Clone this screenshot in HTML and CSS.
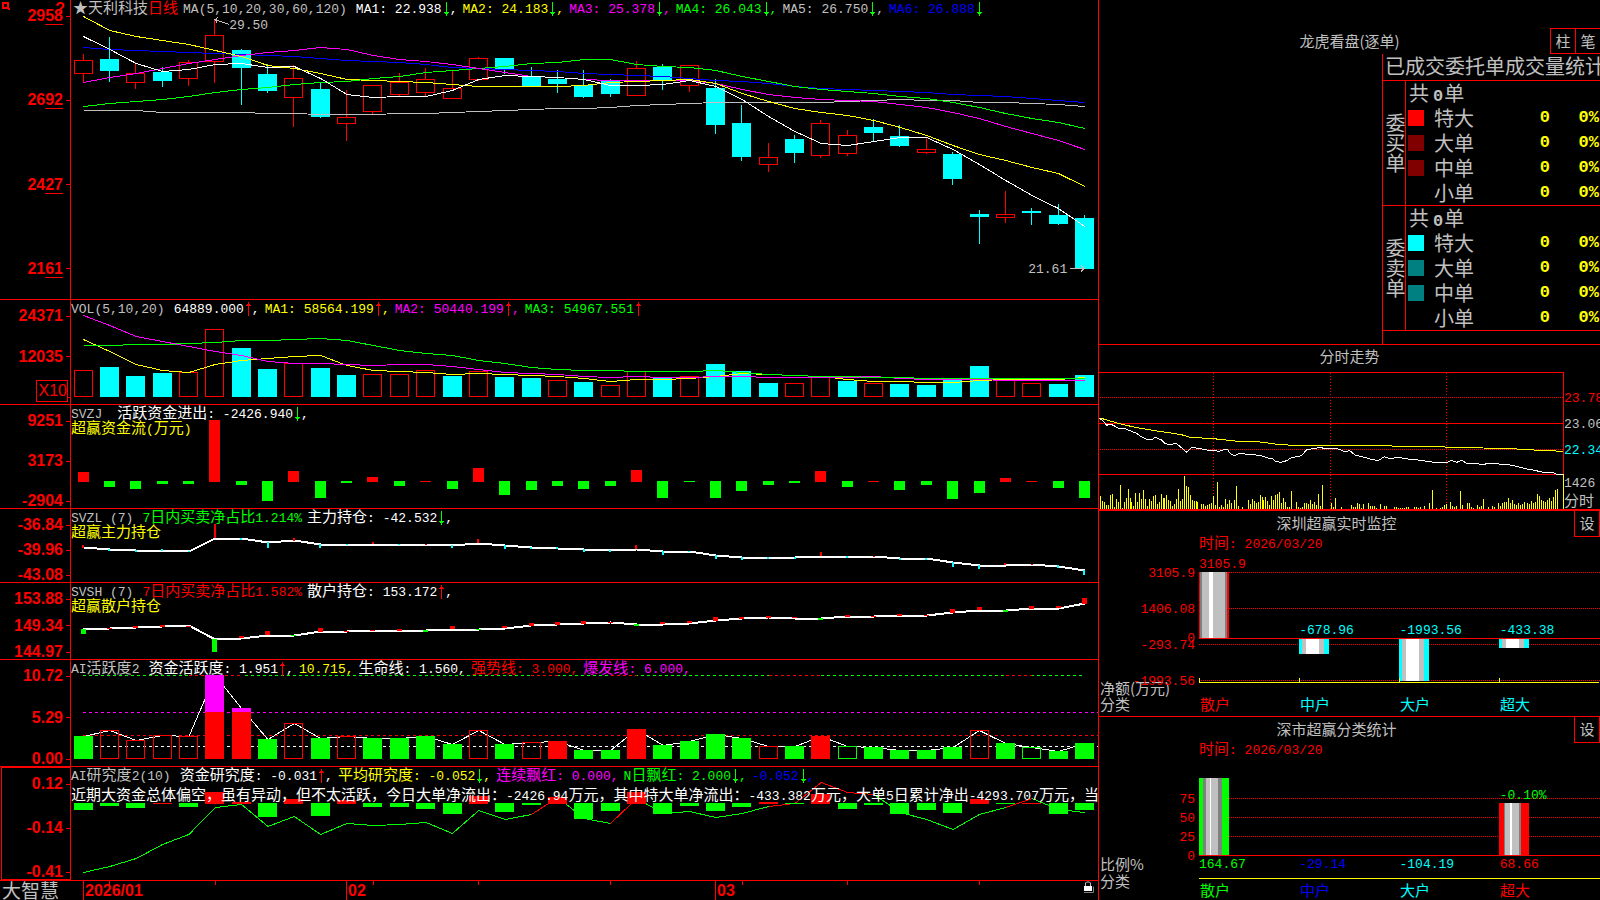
FILE: index.html
```html
<!DOCTYPE html>
<html lang="zh-CN">
<head>
  <meta charset="UTF-8" />
  <meta name="viewport" content="width=device-width, initial-scale=1" />
  <title>天利科技 日线 - 大智慧</title>
  <link rel="stylesheet" href="styles.css">
</head>
<body>
  <svg width="0" height="0" class="defs">
    <symbol id="up" viewBox="0 0 8 14"><path d="M4.5 0v14M2 3.5h5M3 2.5h3" stroke="#f00" fill="none" /></symbol>
    <symbol id="down" viewBox="0 0 8 14"><path d="M4.5 0v14M2 10.5h5M3 11.5h3" stroke="#0f0" fill="none" /></symbol>
  </svg>

  <div class="app">
    <main class="charts">
      <section class="panel">
        <div class="axis">
          <svg class="pin" viewBox="0 0 8 8"><path d="M1 1h5v5h-5zM6 6l2 2" stroke="#f00" stroke-width="2" fill="none" /></svg>
          <span class="help">?</span>
          <span class="tick">29<u>58</u></span>
          <span class="tick">26<u>92</u></span>
          <span class="tick">24<u>27</u></span>
          <span class="tick">21<u>61</u></span>
        </div>
        <div class="view">
          <svg class="plot" id="kline" viewBox="71 0 1027 299" preserveAspectRatio="none"></svg>
          <div class="legend stock">
            <span class="silver"><span class="cn">★天利科技<span class="red">日线</span></span></span>
            <span class="silver name">MA(5,10,20,30,60,120)</span>
            <span>MA1: 22.938<svg class="arrow"><use href="#down" /></svg>,</span>
            <span class="yellow">MA2: 24.183<svg class="arrow"><use href="#down" /></svg>,</span>
            <span class="magenta">MA3: 25.378<svg class="arrow"><use href="#down" /></svg>,</span>
            <span class="green">MA4: 26.043<svg class="arrow"><use href="#down" /></svg>,</span>
            <span class="silver">MA5: 26.750<svg class="arrow"><use href="#down" /></svg>,</span>
            <span class="blue">MA6: 26.888<svg class="arrow"><use href="#down" /></svg></span>
          </div>
          <span class="mark high">29.50</span>
          <span class="mark low">21.61</span>
        </div>
      </section>

      <section class="panel">
        <div class="axis">
          <span class="tick">24371</span>
          <span class="tick">12035</span>
          <span class="tick"></span>
          <span class="scale">X10</span>
        </div>
        <div class="view">
          <svg class="plot" id="vol" viewBox="71 300 1027 104" preserveAspectRatio="none"></svg>
          <div class="legend">
            <span class="silver name">VOL(5,10,20)</span>
            <span>64889.000<svg class="arrow"><use href="#up" /></svg>,</span>
            <span class="yellow">MA1: 58564.199<svg class="arrow"><use href="#up" /></svg>,</span>
            <span class="magenta">MA2: 50440.199<svg class="arrow"><use href="#up" /></svg>,</span>
            <span class="green">MA3: 54967.551<svg class="arrow"><use href="#up" /></svg></span>
          </div>
        </div>
      </section>

      <section class="panel">
        <div class="axis">
          <span class="tick">9251</span>
          <span class="tick">3173</span>
          <span class="tick">-2904</span>
        </div>
        <div class="view">
          <svg class="plot" id="flow" viewBox="71 405 1027 103" preserveAspectRatio="none"></svg>
          <div class="legend">
            <span class="silver name wide">SVZJ</span>
            <span><span class="cn">活跃资金进出</span>: -2426.940<svg class="arrow"><use href="#down" /></svg>,</span>
            <span class="yellow title"><span class="cn">超赢资金流</span>(<span class="cn">万元</span>)</span>
          </div>
        </div>
      </section>

      <section class="panel">
        <div class="axis">
          <span class="tick">-36.84</span>
          <span class="tick">-39.96</span>
          <span class="tick">-43.08</span>
        </div>
        <div class="view">
          <svg class="plot" id="main-hold" viewBox="71 509 1027 73" preserveAspectRatio="none"></svg>
          <div class="legend">
            <span class="silver name">SVZL (7)</span>
            <span class="green">7<span class="cn">日内买卖净占比</span>1.214%</span>
            <span><span class="cn">主力持仓</span>: -42.532<svg class="arrow"><use href="#down" /></svg>,</span>
            <span class="yellow title"><span class="cn">超赢主力持仓</span></span>
          </div>
        </div>
      </section>

      <section class="panel">
        <div class="axis">
          <span class="tick">153.88</span>
          <span class="tick">149.34</span>
          <span class="tick">144.97</span>
        </div>
        <div class="view">
          <svg class="plot" id="retail-hold" viewBox="71 583 1027 76" preserveAspectRatio="none"></svg>
          <div class="legend">
            <span class="silver name">SVSH (7)</span>
            <span class="red">7<span class="cn">日内买卖净占比</span>1.582%</span>
            <span><span class="cn">散户持仓</span>: 153.172<svg class="arrow"><use href="#up" /></svg>,</span>
            <span class="yellow title"><span class="cn">超赢散户持仓</span></span>
          </div>
        </div>
      </section>

      <section class="panel">
        <div class="axis">
          <span class="tick">10.72</span>
          <span class="tick">5.29</span>
          <span class="tick">0.00</span>
        </div>
        <div class="view">
          <svg class="plot" id="active" viewBox="71 660 1027 106" preserveAspectRatio="none"></svg>
          <div class="legend">
            <span class="silver name">AI<span class="cn">活跃度</span>2</span>
            <span><span class="cn">资金活跃度</span>: 1.951<svg class="arrow"><use href="#up" /></svg>,</span>
            <span class="yellow">10.715,</span>
            <span><span class="cn">生命线</span>: 1.560,</span>
            <span class="red"><span class="cn">强势线</span>: 3.000,</span>
            <span class="magenta"><span class="cn">爆发线</span>: 6.000,</span>
          </div>
        </div>
      </section>

      <section class="panel selected">
        <div class="axis">
          <span class="tick">0.12</span>
          <span class="tick">-0.14</span>
          <span class="tick">-0.41</span>
        </div>
        <div class="view">
          <svg class="plot" id="research" viewBox="71 767 1027 113" preserveAspectRatio="none"></svg>
          <div class="legend">
            <span class="silver name">AI<span class="cn">研究度</span>2(10)</span>
            <span><span class="cn">资金研究度</span>: -0.031<svg class="arrow"><use href="#up" /></svg>,</span>
            <span class="yellow"><span class="cn">平均研究度</span>: -0.052<svg class="arrow"><use href="#down" /></svg>,</span>
            <span class="magenta"><span class="cn">连续飘红</span>: 0.000,</span>
            <span class="green">N<span class="cn">日飘红</span>: 2.000<svg class="arrow"><use href="#down" /></svg>,</span>
            <span class="blue">-0.052<svg class="arrow"><use href="#down" /></svg>,</span>
            <p class="comment"><span class="cn">近期大资金总体偏空，虽有异动，但不太活跃，今日大单净流出：</span>-2426.94<span class="cn">万元，其中特大单净流出：</span>-433.382<span class="cn">万元，大单</span>5<span class="cn">日累计净出</span>-4293.707<span class="cn">万元，当日</span></p>
          </div>
        </div>
      </section>

      <footer class="dates">
        <div class="brand">大智慧</div>
        <div class="view">
          <svg class="plot" id="dates" viewBox="71 881 1027 19" preserveAspectRatio="none"></svg>
          <div class="months">
            <span>2026/01</span>
            <span>02</span>
            <span>03</span>
            <svg class="lock" viewBox="0 0 11 12"><path d="M2.5 5v-3l1-1h3l1 1v3" stroke="#c0c0c0" fill="none" /><path d="M1 5h8v5h-8z" fill="#fff" /><path d="M1 11.500h9.500v-6" stroke="#808080" fill="none" /></svg>
          </div>
        </div>
      </footer>
    </main>

    <aside class="side">
      <section class="orders">
        <header class="orders-head">
          <h2>龙虎看盘(逐单)</h2>
          <div class="modes"><button type="button">柱</button><button type="button">笔</button></div>
        </header>
        <div class="stats">
          <h3>已成交委托单成交量统计</h3>
          <table>
            <colgroup><col class="c-side"><col class="c-key"><col class="c-name"><col class="c-num"><col class="c-pct"></colgroup>
            <tbody>
              <tr><th rowspan="5" scope="rowgroup">委买单</th><td colspan="4" class="sum">共<b>0</b>单</td></tr>
              <tr><td><i class="key k-red"></i></td><td>特大</td><td class="num">0</td><td class="num">0%</td></tr>
              <tr><td><i class="key k-maroon"></i></td><td>大单</td><td class="num">0</td><td class="num">0%</td></tr>
              <tr><td><i class="key k-maroon"></i></td><td>中单</td><td class="num">0</td><td class="num">0%</td></tr>
              <tr><td></td><td>小单</td><td class="num">0</td><td class="num">0%</td></tr>
            </tbody>
            <tbody>
              <tr><th rowspan="5" scope="rowgroup">委卖单</th><td colspan="4" class="sum">共<b>0</b>单</td></tr>
              <tr><td><i class="key k-cyan"></i></td><td>特大</td><td class="num">0</td><td class="num">0%</td></tr>
              <tr><td><i class="key k-teal"></i></td><td>大单</td><td class="num">0</td><td class="num">0%</td></tr>
              <tr><td><i class="key k-teal"></i></td><td>中单</td><td class="num">0</td><td class="num">0%</td></tr>
              <tr><td></td><td>小单</td><td class="num">0</td><td class="num">0%</td></tr>
            </tbody>
          </table>
        </div>
      </section>

      <section class="intraday">
        <h2>分时走势</h2>
        <div class="intraday-body">
          <svg class="plot" id="intraday" viewBox="12 96 1395 411" preserveAspectRatio="none"></svg>
          <div class="quotes">
            <span class="red">23.78</span>
            <span class="silver">23.06</span>
            <span class="cyan">22.34</span>
            <span class="silver small first">1426</span>
            <span class="silver small cn">分时</span>
          </div>
        </div>
      </section>

      <section class="monitor">
        <header><h2>深圳超赢实时监控</h2><button type="button">设</button></header>
        <p class="time red"><span class="cn">时间</span>: 2026/03/20</p>
        <div class="bars">
          <div class="levels" id="monitor-levels"></div>
          <div class="view">
            <svg class="plot" id="monitor" viewBox="1199 553 401 130" preserveAspectRatio="none"></svg>
            <div class="values" id="monitor-values"></div>
          </div>
          <div class="units"><span>净额(万元)</span><span>分类</span></div>
          <div class="cats">
            <span class="red">散户</span><span class="cyan">中户</span><span class="cyan">大户</span><span class="cyan">超大</span>
          </div>
        </div>
      </section>

      <section class="ratio">
        <header><h2>深市超赢分类统计</h2><button type="button">设</button></header>
        <p class="time red"><span class="cn">时间</span>: 2026/03/20</p>
        <div class="bars">
          <div class="levels" id="ratio-levels"></div>
          <div class="view">
            <svg class="plot" id="ratio" viewBox="1199 759 401 98" preserveAspectRatio="none"></svg>
            <div class="values" id="ratio-values"></div>
          </div>
          <div class="units"><span>比例%</span><span>分类</span></div>
          <div>
            <div class="totals">
              <span class="green">164.67</span><span class="blue">-29.14</span><span class="cyan">-104.19</span><span class="red">68.66</span>
            </div>
            <div class="cats">
              <span class="green">散户</span><span class="blue">中户</span><span class="cyan">大户</span><span class="red">超大</span>
            </div>
          </div>
        </div>
      </section>
    </aside>
  </div>

  <script src="charts.js"></script>
</body>
</html>
```

FILE: styles.css
```css
* {
  box-sizing: border-box;
}
body {
  margin: 0;
  background: #000;
  color: #fff;
  font-family: "Liberation Mono", "Noto Sans CJK SC", monospace;
  font-size: 13px;
  line-height: 15px;
}
h2, h3, p {
  margin: 0;
  font-weight: normal;
}
.defs {
  position: absolute;
}
.app {
  display: grid;
  grid-template-columns: minmax(0, 1098fr) minmax(0, 502fr);
  height: 100vh;
  overflow: hidden;
}
.cn, .side h2, .side button, .units, .cats {
  font-family: "Noto Sans CJK SC", sans-serif;
  font-size: 15px;
}
/* keeps the taller CJK box from pushing the baseline down */
.legend .cn, .time .cn {
  line-height: 0;
}
.red { color: #f00; }
.green { color: #0f0; }
.blue { color: #00f; }
.cyan { color: #0ff; }
.yellow { color: #ff0; }
.magenta { color: #f0f; }
.silver { color: #c0c0c0; }

/* left: stacked indicator panels */
.charts {
  display: grid;
  grid-template-rows: 300fr 105fr 104fr 74fr 77fr 107fr 114fr 19fr;
  min-height: 0;
}
.panel, .dates {
  display: grid;
  grid-template-columns: 71px minmax(0, 1fr);
  min-height: 0;
}
.panel {
  border-bottom: 1px solid #f00;
}
.axis {
  position: relative;
  display: flex;
  flex-direction: column;
  justify-content: space-between;
  padding: 9px 0 0;
  border-right: 1px solid #f00;
  color: #f00;
  font: bold 16px/14px "Liberation Sans", sans-serif;
}
.panel:first-child .axis {
  padding-bottom: 23px;
}
.tick {
  display: flex;
  justify-content: flex-end;
  align-items: center;
  height: 14px;
}
.tick::after {
  content: "";
  width: 4px;
  height: 1px;
  margin-left: 3px;
  background: #f00;
}
.tick u {
  text-underline-offset: 3px;
  text-decoration-thickness: 1px;
}
.pin {
  position: absolute;
  top: 2px;
  left: 2px;
  width: 8px;
  height: 8px;
}
.help {
  position: absolute;
  top: 2px;
  right: 5px;
}
.scale {
  position: absolute;
  right: 2px;
  bottom: 2px;
  padding: 3px 0 3px 2px;
  border: 1px solid #f00;
  background: #000;
  font-weight: normal;
}
.selected .axis {
  margin-left: 1px;
  border: 1px solid #f00;
}
.view {
  position: relative;
  display: grid;
  min-width: 0;
  min-height: 0;
}
.plot {
  grid-area: 1 / 1;
  width: 100%;
  height: 100%;
  min-height: 0;
  shape-rendering: crispEdges;
}
.plot * {
  vector-effect: non-scaling-stroke;
}
.legend {
  grid-area: 1 / 1;
  display: flex;
  flex-wrap: wrap;
  align-content: flex-start;
  gap: 0 5px;
  padding-top: 2px;
  overflow: hidden;
  white-space: pre;
}
.stock {
  padding-left: 2px;
}
.legend .name {
  margin-right: 4px;
}
.legend .wide {
  margin-right: 10px;
}
.legend .title, .comment {
  width: 100%;
}
.legend > span {
  height: 15px;
}
.comment {
  margin-top: 5px;
}
.arrow {
  width: 8px;
  height: 14px;
  vertical-align: -3px;
}
.mark {
  position: absolute;
  color: #c0c0c0;
}
.high {
  top: 6%;
  left: 15.4%;
}
.low {
  top: 87.5%;
  right: 3%;
}
.brand {
  padding-left: 2px;
  color: #c0c0c0;
  font: 19px/18px "Noto Sans CJK SC", sans-serif;
}
.months {
  grid-area: 1 / 1;
  display: grid;
  grid-template-columns: 263fr 369fr 362fr 21px;
  padding-left: 1.17%;
  color: #f00;
  font: bold 16px/19px "Liberation Sans", sans-serif;
}
.months span {
  padding-left: 1px;
  border-left: 1px solid #f00;
}
.lock {
  width: 11px;
  height: 12px;
  margin-left: 6px;
}

/* right column */
.side {
  display: grid;
  grid-template-rows: 345fr 165fr 207fr 183fr;
  min-height: 0;
  border-left: 1px solid #f00;
}
.side > section {
  min-width: 0;
  min-height: 0;
  overflow: hidden;
}
.side > section:not(:last-child) {
  border-bottom: 1px solid #f00;
}
.side h2 {
  color: #c0c0c0;
  text-align: center;
}
.side button {
  width: 26px;
  height: 26px;
  padding: 0 0 2px;
  border: 1px solid #f00;
  background: #000;
  color: #c0c0c0;
}
.orders {
  display: flex;
  flex-direction: column;
}
.orders-head {
  display: grid;
  grid-template-columns: 1fr auto 1fr;
  align-items: center;
  padding-top: 28px;
}
.orders-head h2 {
  grid-column: 2;
  padding-bottom: 2px;
}
.modes {
  display: flex;
  justify-self: end;
}
.modes button + button {
  width: 25px;
  margin-left: -1px;
  border-right: 0;
}
.stats {
  flex: 1;
  align-self: flex-end;
  width: 218px;
  border-left: 1px solid #f00;
  color: #c0c0c0;
  font: 20px/24px "Noto Sans CJK SC", sans-serif;
}
.stats h3 {
  height: 26px;
  padding-left: 2px;
  overflow: hidden;
  font-size: 20px;
  line-height: 23px;
  white-space: nowrap;
}
.stats table {
  width: 100%;
  table-layout: fixed;
  border-spacing: 0;
  border-bottom: 1px solid #f00;
}
.stats td, .stats th {
  height: 25px;
  padding: 0;
  font-weight: normal;
  line-height: 22px;
  vertical-align: middle;
}
.stats tr:first-child > * {
  border-top: 1px solid #f00;
}
.stats th {
  border-right: 1px solid #f00;
  text-align: center;
  writing-mode: vertical-rl;
}
.c-side { width: 23px; }
.c-key { width: 28px; }
.c-num { width: 46px; }
.c-pct { width: 50px; }
.stats .sum {
  padding-left: 3px;
}
.stats b {
  margin: 0 1px 0 4px;
  font: bold 17px/1px "Liberation Mono", monospace;
}
.stats .num {
  color: #ff0;
  font: bold 17px/22px "Liberation Mono", monospace;
  text-align: right;
}
.stats .num:last-child {
  padding-right: 1px;
}
.key {
  display: block;
  width: 16px;
  height: 16px;
  margin-left: 2px;
}
.k-red { background: #f00; }
.k-maroon { background: #800000; }
.k-cyan { background: #0ff; }
.k-teal { background: #008080; }

.intraday {
  display: flex;
  flex-direction: column;
}
.intraday h2 {
  height: 27px;
  line-height: 22px;
}
.intraday-body {
  flex: 1;
  display: grid;
  grid-template-columns: minmax(0, 1fr) 36px;
  min-height: 0;
}
.quotes {
  display: flex;
  flex-direction: column;
  padding: 14px 0 0;
  overflow: hidden;
  line-height: 26px;
}
.quotes .small {
  line-height: 16px;
}
.quotes .first {
  margin-top: 12px;
}

.monitor, .ratio {
  display: flex;
  flex-direction: column;
}
.monitor {
  border-top: 1px solid #f00;
}
.monitor header, .ratio header {
  display: flex;
}
.monitor header h2, .ratio header h2 {
  flex: 1;
  line-height: 23px;
}
.monitor header button, .ratio header button {
  border-top: 0;
}
.time {
  padding-left: 100px;
  line-height: 16px;
}
.bars {
  flex: 1;
  display: grid;
  grid-template-columns: 100px minmax(0, 1fr);
  min-height: 0;
}
.monitor .bars {
  grid-template-rows: minmax(0, 1fr) 33px;
}
.ratio .bars {
  grid-template-rows: minmax(0, 1fr) 43px;
}
.levels {
  position: relative;
  color: #f00;
}
.levels span {
  position: absolute;
  right: 4px;
  transform: translateY(-50%);
}
.values {
  position: absolute;
  inset: 0;
}
.values span {
  position: absolute;
  transform: translateY(-50%);
}
.units {
  display: flex;
  flex-direction: column;
  justify-content: flex-end;
  padding: 0 0 4px 1px;
  color: #c0c0c0;
  line-height: 16px;
}
.ratio .units {
  justify-content: flex-start;
  margin-top: -2px;
  line-height: 17px;
}
.cats, .totals {
  display: grid;
  grid-template-columns: repeat(4, 1fr);
}
.cats {
  padding: 13px 0 0 1px;
}
.totals {
  height: 21px;
  line-height: 16px;
}
.ratio .cats {
  padding-top: 3px;
  border-top: 1px solid #ff0;
}
```

FILE: charts.js
```js
const RED = '#f00', GREEN = '#0f0', CYAN = '#0ff', BLUE = '#00f';
const WHITE = '#fff', SILVER = '#c0c0c0', GRAY = '#808080', YELLOW = '#ff0', MAGENTA = '#f0f';

const STEP = 26.35;
const center = i => 83.5 + STEP * i;

function add(svg, tag, attrs) {
  const el = document.createElementNS('http://www.w3.org/2000/svg', tag);
  for (const key in attrs) el.setAttribute(key, attrs[key]);
  svg.appendChild(el);
  return el;
}
function rect(svg, x, top, width, bottom, fill) {
  add(svg, 'rect', { x: x, y: top, width: width, height: Math.max(1, bottom - top), fill: fill });
}
function box(svg, x, top, width, bottom, stroke) {
  add(svg, 'rect', { x: x + 0.5, y: top + 0.5, width: width - 1, height: Math.max(1, bottom - top - 1), fill: 'none', stroke: stroke });
}
function path(svg, points, stroke, width) {
  add(svg, 'polyline', { points: points.map(p => p.join(',')).join(' '), fill: 'none', stroke: stroke, 'stroke-width': width || 1 });
}
function series(svg, values, stroke, width) {
  path(svg, values.map((y, i) => [center(i), y + 0.5]), stroke, width);
}
function line(svg, x1, y1, x2, y2, stroke, dash) {
  const el = add(svg, 'line', { x1: x1, y1: y1, x2: x2, y2: y2, stroke: stroke });
  if (dash) el.setAttribute('stroke-dasharray', dash);
}
const left = (i, width) => Math.floor(center(i) - width / 2 + 0.1);

// daily candles: direction, high, body top, body bottom, low
const kline = document.getElementById('kline');
const candles = [
  ['r', 54, 60, 74, 82], ['c', 37, 59, 71, 82], ['r', 62, 73, 83, 89], ['c', 67, 72, 81, 87], ['r', 60, 62, 79, 86],
  ['r', 19, 35, 62, 83], ['c', 49, 50, 68, 105], ['c', 64, 74, 91, 93], ['r', 65, 78, 98, 127], ['c', 83, 89, 117, 118],
  ['r', 90, 117, 124, 141], ['r', 85, 85, 112, 115], ['r', 73, 82, 95, 97], ['r', 68, 79, 93, 97], ['r', 70, 88, 99, 99],
  ['r', 57, 58, 80, 81], ['c', 58, 58, 69, 74], ['c', 67, 77, 86, 86], ['c', 70, 79, 84, 93], ['c', 70, 85, 97, 98],
  ['c', 79, 81, 94, 97], ['r', 61, 68, 96, 96], ['c', 64, 67, 80, 90], ['r', 65, 65, 86, 92], ['c', 79, 88, 125, 134],
  ['c', 105, 123, 157, 161], ['r', 143, 157, 165, 172], ['c', 135, 139, 153, 163], ['r', 120, 123, 156, 158], ['r', 130, 135, 154, 156],
  ['c', 119, 127, 133, 141], ['c', 125, 136, 146, 147], ['r', 138, 149, 153, 154], ['c', 152, 154, 179, 185], ['c', 210, 214, 217, 244],
  ['r', 191, 214, 218, 223], ['c', 208, 211, 213, 225], ['c', 204, 215, 224, 225], ['c', 215, 218, 269, 269]
];
candles.forEach(([dir, high, top, bottom, low], i) => {
  const x = left(i, 19);
  const color = dir === 'r' ? RED : CYAN;
  if (high < top) rect(kline, x + 9, high, 1, top, color);
  if (low > bottom) rect(kline, x + 9, bottom, 1, low, color);
  if (dir === 'r') box(kline, x, top, 19, bottom, RED);
  else rect(kline, x, top, 19, bottom, CYAN);
});
series(kline, [110, 110, 110, 112, 112, 112, 112, 113, 113, 114, 114, 114, 113, 113, 112, 111, 110, 109, 108, 108, 107, 105, 104, 103, 102, 102, 102, 102, 102, 101, 100, 99, 100, 100, 102, 102, 103, 104, 106], SILVER);
series(kline, [47, 49, 50, 51, 52, 53, 54, 55, 56, 58, 60, 61, 62, 64, 67, 68, 69, 70, 71, 73, 74, 75, 76, 78, 80, 81, 83, 86, 88, 89, 90, 91, 92, 94, 95, 96, 98, 100, 102], BLUE);
series(kline, [106, 103, 101, 99, 96, 92, 89, 87, 84, 82, 81, 78, 76, 72, 70, 68, 66, 63, 62, 59, 59, 64, 66, 67, 70, 76, 81, 86, 89, 91, 93, 96, 98, 102, 107, 113, 118, 122, 128], GREEN);
series(kline, [82, 77, 73, 68, 63, 59, 55, 52, 50, 47, 49, 55, 59, 61, 64, 68, 72, 76, 77, 79, 80, 80, 80, 80, 83, 89, 94, 97, 99, 100, 101, 104, 107, 112, 118, 126, 133, 140, 149], MAGENTA);
series(kline, [16, 30, 36, 40, 44, 50, 56, 65, 68, 73, 79, 80, 81, 82, 84, 86, 86, 86, 86, 85, 82, 81, 80, 79, 83, 93, 101, 108, 112, 115, 120, 127, 135, 145, 154, 160, 167, 173, 186], YELLOW);
series(kline, [36, 49, 63, 71, 69, 64, 63, 67, 66, 78, 94, 97, 96, 96, 90, 79, 75, 76, 77, 79, 85, 85, 84, 80, 86, 99, 116, 131, 143, 145, 141, 137, 137, 149, 164, 180, 195, 208, 226], WHITE);
path(kline, [[229, 24.5], [215, 19.5], [218, 17.5]], SILVER);
path(kline, [[215, 19.5], [217, 22.5]], SILVER);
path(kline, [[1070, 268.5], [1084, 268.5], [1081, 265.5]], SILVER);
path(kline, [[1084, 268.5], [1081, 271.5]], SILVER);

// volume
const vol = document.getElementById('vol');
const volTop = [370, 367, 376, 373, 372, 329, 348, 369, 363, 368, 375, 374, 374, 370, 376, 371, 377, 378, 380, 382, 385, 371, 378, 376, 364, 371, 383, 383, 377, 381, 383, 384, 385, 380, 366, 379, 383, 384, 375];
const volDir = 'rcccrrccrccrrrcrccrcrrcrcccrrcrccccrrcc';
volTop.forEach((y, i) => {
  if (volDir[i] === 'r') box(vol, left(i, 19), y, 19, 397, RED);
  else rect(vol, left(i, 19), y, 19, 397, CYAN);
});
series(vol, [339, 351, 364, 370, 372, 364, 360, 358, 356, 355, 365, 370, 371, 372, 374, 373, 374, 375, 376, 378, 381, 379, 379, 378, 376, 373, 374, 375, 376, 379, 381, 381, 382, 382, 380, 379, 379, 379, 377], YELLOW);
series(vol, [315, 325, 336, 341, 346, 351, 355, 361, 363, 363, 364, 365, 364, 364, 366, 369, 372, 373, 374, 376, 377, 376, 377, 377, 376, 376, 377, 377, 377, 377, 376, 378, 379, 379, 379, 380, 380, 380, 380], MAGENTA);
series(vol, [345, 345, 344, 344, 343, 342, 340, 340, 339, 338, 340, 345, 350, 353, 355, 360, 363, 367, 369, 370, 370, 371, 371, 371, 370, 372, 374, 375, 376, 376, 377, 377, 378, 378, 378, 378, 378, 378, 378], GREEN);

// net flow, bars grow from the zero line
const flow = document.getElementById('flow');
[472, 487, 489, 484, 484, 420, 485, 501, 471, 498, 483, 477, 486, 481, 489, 468, 495, 490, 486, 489, 486, 470, 498, 482, 498, 491, 485, 483, 471, 487, 481, 490, 485, 499, 493, 478, 481, 488, 498].forEach((y, i) => {
  if (y < 482) rect(flow, left(i, 11), y, 11, 482, RED);
  else rect(flow, left(i, 11), 481, 11, y, GREEN);
});

// main force position
const mainHold = document.getElementById('main-hold');
series(mainHold, [547, 549, 550, 550, 551, 538, 538, 542, 540, 544, 544, 544, 544, 544, 545, 543, 545, 547, 548, 549, 550, 549, 551, 551, 555, 557, 557, 557, 556, 556, 556, 558, 558, 562, 565, 565, 564, 566, 570], WHITE, 2);
[
  ['r', 545, 548], ['c', 549, 551], ['c', 550, 552], ['c', 549, 551], ['c', 551, 552], ['r', 524, 538], ['c', 538, 540], ['c', 542, 548],
  ['r', 538, 541], ['c', 544, 548], ['c', 544, 545], ['r', 542, 544], ['c', 544, 545], ['r', 544, 545], ['c', 545, 548], ['r', 539, 543],
  ['c', 545, 549], ['c', 547, 549], ['c', 547, 549], ['c', 549, 552], ['c', 550, 552], ['r', 545, 549], ['c', 551, 555], ['c', 551, 552],
  ['c', 555, 559], ['c', 557, 560], ['c', 557, 559], ['c', 557, 559], ['r', 552, 556], ['c', 556, 558], ['r', 556, 557], ['c', 558, 560],
  ['c', 558, 560], ['c', 562, 567], ['c', 565, 569], ['r', 563, 565], ['r', 564, 565], ['c', 565, 568], ['c', 570, 575]
].forEach(([dir, top, bottom], i) => rect(mainHold, left(i, 2), top, 2, bottom, dir === 'r' ? RED : CYAN));

// retail position
const retailHold = document.getElementById('retail-hold');
series(retailHold, [629, 628, 627, 626, 625, 639, 638, 635, 635, 631, 631, 630, 630, 630, 629, 629, 628, 625, 624, 623, 622, 624, 624, 623, 620, 618, 617, 618, 618, 616, 616, 615, 615, 612, 610, 610, 608, 608, 603], WHITE, 2);
[
  ['g', 629, 634], ['r', 628, 629], ['r', 626, 628], ['r', 625, 627], ['r', 626, 627], ['g', 639, 652], ['r', 636, 638], ['r', 631, 635],
  ['g', 635, 636], ['r', 628, 632], ['r', 631, 632], ['r', 630, 631], ['r', 629, 631], ['g', 630, 632], ['r', 626, 629], ['g', 629, 630],
  ['r', 626, 628], ['r', 623, 626], ['r', 622, 625], ['r', 621, 624], ['r', 622, 623], ['g', 624, 626], ['r', 622, 624], ['r', 621, 623],
  ['r', 617, 621], ['r', 617, 619], ['r', 616, 618], ['r', 617, 618], ['g', 618, 620], ['r', 615, 617], ['r', 616, 617], ['r', 614, 616],
  ['r', 615, 616], ['r', 609, 613], ['r', 607, 610], ['g', 610, 612], ['r', 606, 609], ['r', 606, 608], ['r', 598, 604]
].forEach(([dir, top, bottom], i) => rect(retailHold, left(i, 5), top, 5, bottom, dir === 'r' ? RED : GREEN));

// activity: upper case is a solid bar, lower case an outline
const active = document.getElementById('active');
const activeTop = [736, 730, 740, 735, 736, 675, 708, 739, 723, 738, 736, 738, 738, 736, 744, 730, 744, 742, 741, 750, 750, 729, 745, 741, 734, 738, 746, 746, 736, 746, 747, 750, 750, 747, 730, 743, 747, 751, 743];
const activeDir = 'GrrrrRRGrGrGGGGrGrRGGRGGGGrGRgGGGGrGgGG';
line(active, 83, 675.5, 1084, 675.5, GREEN, '3 3');
[[4, 6], [17, 18], [20, 21], [26, 28], [35, 36]].forEach(([a, b]) => {
  rect(active, center(a), 675, center(b) - center(a), 676, '#000');
  line(active, center(a), 675.5, center(b), 675.5, RED, '3 3');
});
line(active, 83, 712.5, 1098, 712.5, MAGENTA, '3 3');
line(active, 83, 735.5, 1098, 735.5, RED, '3 3');
line(active, 83, 746.5, 1098, 746.5, WHITE, '3 3');
series(active, activeTop, WHITE);
activeTop.forEach((y, i) => {
  const x = left(i, 19);
  const color = activeDir[i].toLowerCase() === 'r' ? RED : GREEN;
  if (activeDir[i] === activeDir[i].toLowerCase()) box(active, x, y, 19, 759, color);
  else rect(active, x, y, 19, 759, color);
  if (y < 712) rect(active, x, y, 19, 712, MAGENTA);
});

// research
const research = document.getElementById('research');
const researchLine = [872, 866, 858, 844, 834, 807, 804, 826, 816, 834, 823, 825, 824, 822, 833, 810, 819, 814, 797, 818, 823, 798, 813, 811, 817, 813, 806, 803, 782, 792, 794, 812, 819, 829, 814, 807, 798, 809, 812];
series(research, researchLine, GREEN);
[[17, 18], [20, 21], [26, 30], [35, 36]].forEach(([a, b]) => {
  path(research, researchLine.slice(a, b + 1).map((y, n) => [center(a + n), y + 0.5]), RED);
});
[810, 806, 808, 803, 807, 792, 802, 817, 799, 816, 800, 807, 807, 809, 814, 796, 812, 805, 797, 819, 811, 792, 814, 806, 811, 807, 802, 804, 794, 809, 805, 814, 810, 813, 799, 804, 803, 814, 810].forEach((y, i) => {
  if (y < 804) rect(research, left(i, 19), y, 19, 804, RED);
  else rect(research, left(i, 19), 803, 19, y, GREEN);
});

// week ticks
const dates = document.getElementById('dates');
[1, 5, 11, 15, 20, 25, 29, 34].forEach(i => rect(dates, Math.floor(center(i)), 881, 1, 885, RED));

// intraday
const intraday = document.getElementById('intraday');
[172.5, 328.5].forEach(y => line(intraday, 15, y, 1405, y, RED, '1 1'));
[355, 706, 1054].forEach(x => line(intraday, x, 100, x, 507, RED, '1 2'));
line(intraday, 12, 97.5, 1407, 97.5, RED);
line(intraday, 12, 250.5, 1407, 250.5, RED);
line(intraday, 12, 403.5, 1407, 403.5, RED);
line(intraday, 1405.5, 97, 1405.5, 507, RED);
[
  [16, 468], [22, 483], [28, 486], [34, 495], [40, 495], [46, 465], [52, 462], [58, 501], [64, 477], [70, 486], [76, 435], [82, 504],
  [88, 486], [94, 474], [100, 447], [106, 474], [109, 486], [115, 498], [121, 459], [127, 486], [133, 459], [139, 478], [145, 450],
  [151, 478], [157, 498], [163, 478], [169, 483], [175, 468], [181, 465], [187, 492], [193, 486], [199, 462], [205, 474], [208, 474],
  [214, 465], [220, 480], [226, 483], [232, 498], [238, 492], [244, 478], [250, 447], [256, 483], [262, 478], [268, 408], [274, 438],
  [280, 441], [286, 465], [292, 480], [298, 483], [304, 484], [307, 486], [319, 492], [325, 492], [331, 498], [337, 496], [343, 492],
  [349, 489], [355, 468], [361, 495], [367, 426], [373, 501], [379, 495], [385, 501], [391, 477], [397, 492], [403, 480], [409, 489],
  [418, 480], [424, 438], [430, 498], [442, 501], [460, 480], [466, 492], [472, 477], [478, 483], [484, 489], [490, 486], [496, 465],
  [502, 471], [505, 480], [511, 471], [517, 483], [523, 495], [529, 468], [535, 480], [541, 465], [547, 462], [553, 456], [559, 489],
  [565, 474], [571, 486], [577, 501], [583, 501], [589, 453], [604, 486], [610, 501], [616, 504], [622, 501], [628, 489], [634, 489],
  [640, 492], [646, 480], [652, 492], [658, 486], [664, 495], [670, 462], [676, 498], [682, 435], [709, 489], [715, 501], [721, 474],
  [739, 501], [769, 495], [775, 501], [781, 501], [787, 489], [793, 492], [799, 504], [805, 492], [820, 489], [826, 498], [832, 498],
  [838, 498], [844, 504], [856, 492], [868, 498], [874, 498], [898, 501], [904, 501], [910, 504], [916, 504], [922, 504], [928, 504],
  [934, 501], [940, 501], [958, 501], [964, 501], [970, 504], [976, 501], [988, 498], [1003, 489], [1012, 450], [1024, 504],
  [1036, 504], [1042, 501], [1048, 495], [1054, 492], [1066, 486], [1072, 498], [1078, 501], [1084, 498], [1096, 453], [1102, 495],
  [1117, 489], [1123, 489], [1129, 501], [1135, 504], [1147, 495], [1153, 501], [1159, 498], [1165, 477], [1180, 501], [1192, 498],
  [1198, 501], [1210, 489], [1216, 498], [1222, 489], [1228, 486], [1234, 486], [1240, 474], [1246, 489], [1252, 480], [1258, 492],
  [1264, 495], [1270, 489], [1276, 495], [1282, 492], [1288, 486], [1297, 489], [1303, 492], [1309, 483], [1315, 489], [1321, 486],
  [1327, 462], [1333, 468], [1339, 480], [1345, 483], [1351, 486], [1357, 480], [1363, 474], [1369, 483], [1375, 471], [1381, 450],
  [1387, 447], [1405, 402]
].forEach(([x, y]) => line(intraday, x + 0.5, y, x + 0.5, 507, YELLOW));
path(intraday, [[15, 234], [70, 250], [120, 262], [180, 272], [240, 281], [268, 286], [285, 292], [355, 296], [430, 304], [495, 306], [540, 312], [590, 316], [830, 317], [1010, 320], [1165, 324], [1265, 327], [1335, 331], [1405, 334]], YELLOW);
path(intraday, [
  [13, 235], [22, 240], [35, 256], [45, 252], [55, 256], [68, 264], [85, 264], [105, 272], [125, 280], [140, 291], [155, 298],
  [170, 300], [180, 292], [198, 299], [210, 310], [228, 315], [242, 309], [258, 322], [274, 337], [290, 322], [315, 326], [340, 331],
  [360, 331], [370, 335], [385, 330], [397, 328], [405, 340], [418, 347], [432, 341], [470, 343], [500, 348], [518, 354], [530, 354],
  [542, 364], [558, 367], [575, 362], [590, 352], [610, 350], [622, 344], [635, 329], [655, 326], [675, 322], [690, 326], [725, 325],
  [735, 329], [752, 336], [763, 331], [780, 345], [800, 350], [830, 358], [850, 362], [868, 350], [885, 356], [910, 352], [940, 357],
  [970, 360], [1012, 366], [1060, 366], [1070, 361], [1085, 367], [1101, 361], [1115, 370], [1140, 371], [1165, 373], [1185, 370],
  [1240, 374], [1265, 379], [1290, 386], [1315, 390], [1340, 396], [1370, 396], [1382, 402], [1405, 404]
], WHITE);

// cylinder bars: [offset, color] stripes over 30 units
function cylinder(svg, x, top, bottom, stripes) {
  stripes.forEach(([from, color], n) => {
    const to = n + 1 < stripes.length ? stripes[n + 1][0] : 30;
    rect(svg, x + from, top, to - from, bottom, color);
  });
}
function labels(id, origin, height, list) {
  const host = document.getElementById(id);
  list.forEach(([text, y, cls, column]) => {
    const el = document.createElement('span');
    el.textContent = text;
    if (cls) el.className = cls;
    el.style.top = (y - origin) / height * 100 + '%';
    if (column !== undefined) el.style.left = column * 25 + '%';
    host.appendChild(el);
  });
}

const monitor = document.getElementById('monitor');
[572.5, 608.5, 644.5, 680.5].forEach(y => line(monitor, 1199, y, 1600, y, RED, '1 1'));
line(monitor, 1199, 638.5, 1600, 638.5, RED);
cylinder(monitor, 1199, 572, 638, [[0, RED], [1, GRAY], [3, SILVER], [10, WHITE], [14, SILVER], [26, GRAY], [28, RED]]);
const cyanBar = [[0, CYAN], [3, SILVER], [7, WHITE], [20, SILVER], [25, CYAN]];
cylinder(monitor, 1299, 639, 654, cyanBar);
cylinder(monitor, 1399, 639, 681, cyanBar);
cylinder(monitor, 1499, 639, 648, cyanBar);
line(monitor, 1199, 682.5, 1599, 682.5, YELLOW);
[0, 1, 2, 3].forEach(n => rect(monitor, 1199 + n * 100, 678, 1, 682, YELLOW));
labels('monitor-levels', 553, 130, [['3105.9', 573], ['1406.08', 609], ['0', 638], ['-293.74', 645], ['-1993.56', 681]]);
labels('monitor-values', 553, 130, [['3105.9', 564, 'red', 0], ['-678.96', 630, 'cyan', 1], ['-1993.56', 630, 'cyan', 2], ['-433.38', 630, 'cyan', 3]]);

const ratio = document.getElementById('ratio');
[798.5, 817.5, 836.5].forEach(y => line(ratio, 1199, y, 1600, y, RED, '1 1'));
line(ratio, 1199, 855.5, 1600, 855.5, RED);
cylinder(ratio, 1199, 778, 855, [[0, GREEN], [4, GRAY], [7, SILVER], [11, WHITE], [12, SILVER], [19, GRAY], [23, GREEN]]);
cylinder(ratio, 1499, 803, 855, [[0, RED], [5, GRAY], [6, SILVER], [11, WHITE], [13, SILVER], [20, GRAY], [22, RED]]);
labels('ratio-levels', 759, 98, [['75', 799], ['50', 818], ['25', 837], ['0', 856]]);
labels('ratio-values', 759, 98, [['-0.10%', 795, 'green', 3]]);
```
